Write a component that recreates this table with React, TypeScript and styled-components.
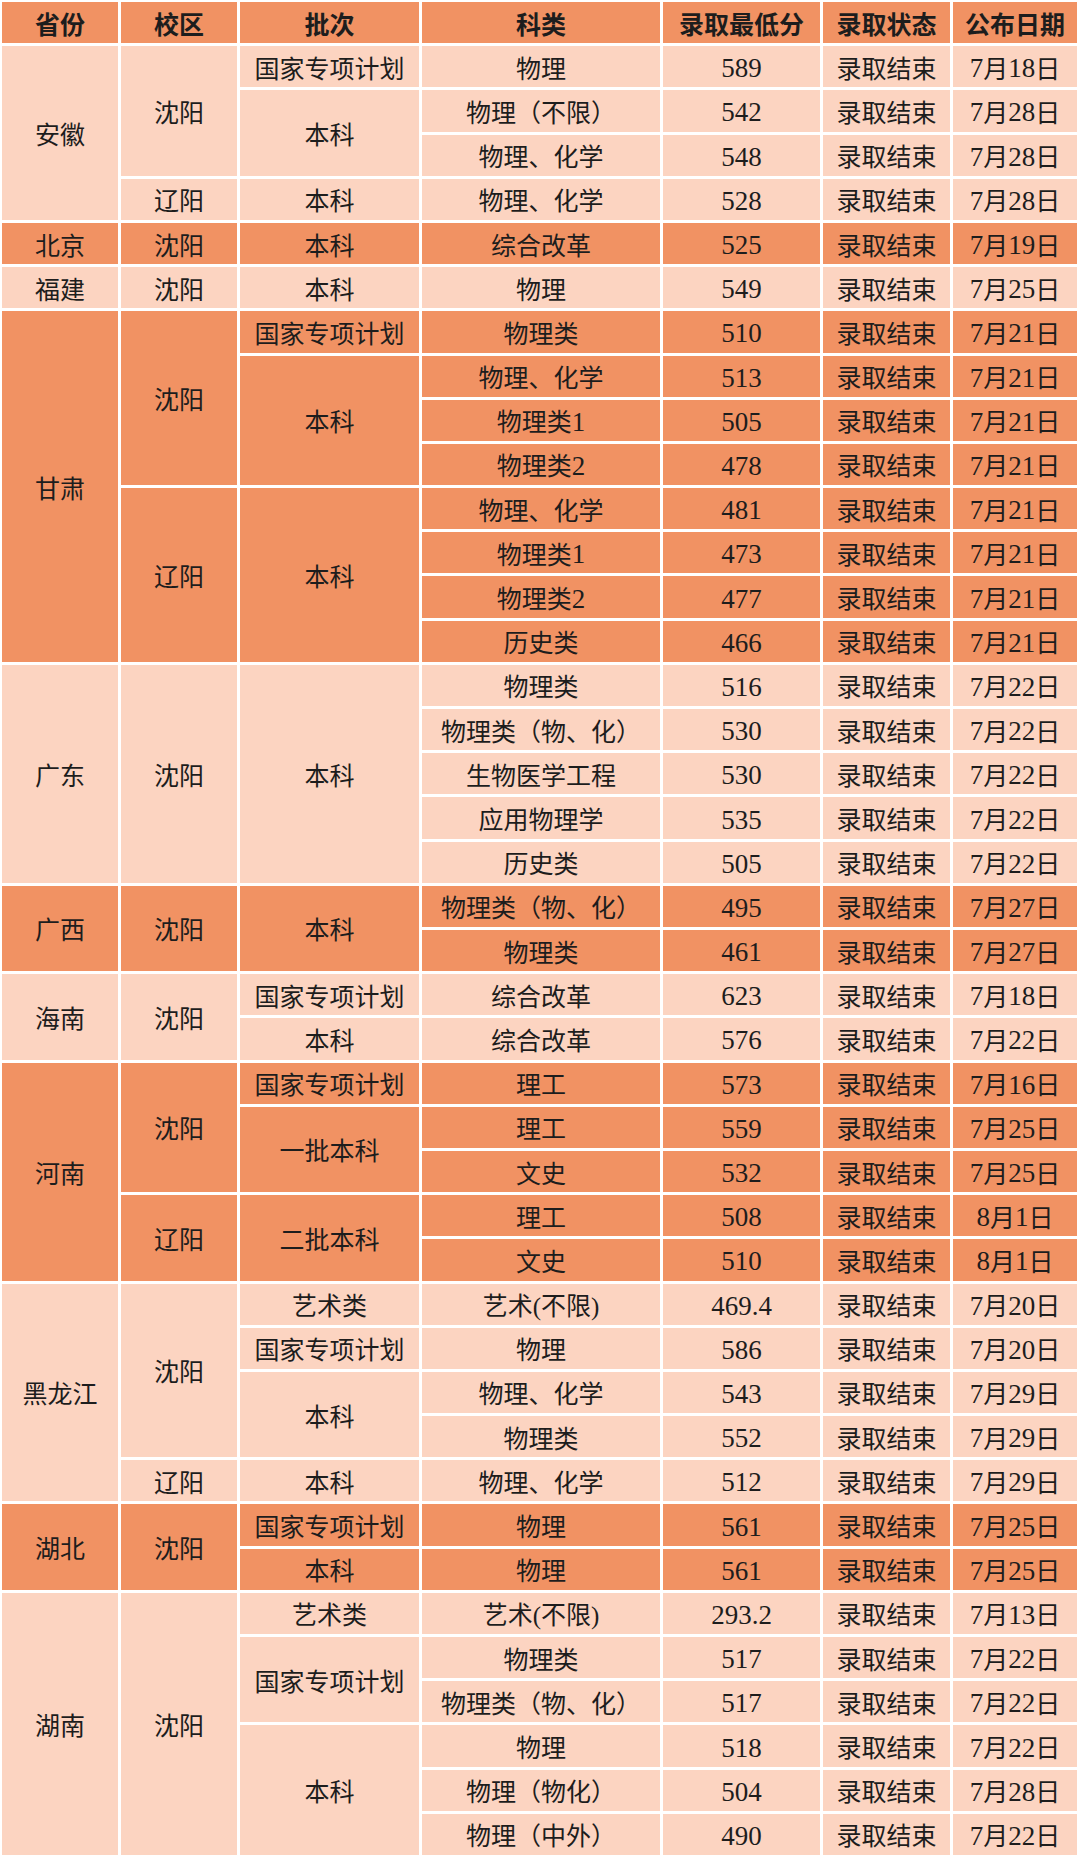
import styled, { createGlobalStyle } from "styled-components";

type Tone = "dark" | "light";

type Line = [string, string, string];
type Batch = { name: string; lines: Line[] };
type Campus = { name: string; batches: Batch[] };
type Province = { name: string; campuses: Campus[] };

const GlobalStyle = createGlobalStyle`
  html, body {
    margin: 0;
    padding: 0;
    background: #ffffff;
  }
`;

const headers = ["省份", "校区", "批次", "科类", "录取最低分", "录取状态", "公布日期"];

const provinces: Province[] = [
    {
        name: "安徽",
        campuses: [
            {
                name: "沈阳",
                batches: [
                    {name: "国家专项计划", lines: [["物理", "589", "7月18日"]]},
                    {name: "本科", lines: [["物理（不限）", "542", "7月28日"], ["物理、化学", "548", "7月28日"]]},
                ],
            },
            {name: "辽阳", batches: [{name: "本科", lines: [["物理、化学", "528", "7月28日"]]}]},
        ],
    },
    {
        name: "北京",
        campuses: [{name: "沈阳", batches: [{name: "本科", lines: [["综合改革", "525", "7月19日"]]}]}],
    },
    {
        name: "福建",
        campuses: [{name: "沈阳", batches: [{name: "本科", lines: [["物理", "549", "7月25日"]]}]}],
    },
    {
        name: "甘肃",
        campuses: [
            {
                name: "沈阳",
                batches: [
                    {name: "国家专项计划", lines: [["物理类", "510", "7月21日"]]},
                    {
                        name: "本科",
                        lines: [["物理、化学", "513", "7月21日"], ["物理类1", "505", "7月21日"], ["物理类2", "478", "7月21日"]],
                    },
                ],
            },
            {
                name: "辽阳",
                batches: [
                    {
                        name: "本科",
                        lines: [
                            ["物理、化学", "481", "7月21日"],
                            ["物理类1", "473", "7月21日"],
                            ["物理类2", "477", "7月21日"],
                            ["历史类", "466", "7月21日"],
                        ],
                    },
                ],
            },
        ],
    },
    {
        name: "广东",
        campuses: [
            {
                name: "沈阳",
                batches: [
                    {
                        name: "本科",
                        lines: [
                            ["物理类", "516", "7月22日"],
                            ["物理类（物、化）", "530", "7月22日"],
                            ["生物医学工程", "530", "7月22日"],
                            ["应用物理学", "535", "7月22日"],
                            ["历史类", "505", "7月22日"],
                        ],
                    },
                ],
            },
        ],
    },
    {
        name: "广西",
        campuses: [
            {
                name: "沈阳",
                batches: [{name: "本科", lines: [["物理类（物、化）", "495", "7月27日"], ["物理类", "461", "7月27日"]]}],
            },
        ],
    },
    {
        name: "海南",
        campuses: [
            {
                name: "沈阳",
                batches: [
                    {name: "国家专项计划", lines: [["综合改革", "623", "7月18日"]]},
                    {name: "本科", lines: [["综合改革", "576", "7月22日"]]},
                ],
            },
        ],
    },
    {
        name: "河南",
        campuses: [
            {
                name: "沈阳",
                batches: [
                    {name: "国家专项计划", lines: [["理工", "573", "7月16日"]]},
                    {name: "一批本科", lines: [["理工", "559", "7月25日"], ["文史", "532", "7月25日"]]},
                ],
            },
            {
                name: "辽阳",
                batches: [{name: "二批本科", lines: [["理工", "508", "8月1日"], ["文史", "510", "8月1日"]]}],
            },
        ],
    },
    {
        name: "黑龙江",
        campuses: [
            {
                name: "沈阳",
                batches: [
                    {name: "艺术类", lines: [["艺术(不限)", "469.4", "7月20日"]]},
                    {name: "国家专项计划", lines: [["物理", "586", "7月20日"]]},
                    {name: "本科", lines: [["物理、化学", "543", "7月29日"], ["物理类", "552", "7月29日"]]},
                ],
            },
            {name: "辽阳", batches: [{name: "本科", lines: [["物理、化学", "512", "7月29日"]]}]},
        ],
    },
    {
        name: "湖北",
        campuses: [
            {
                name: "沈阳",
                batches: [
                    {name: "国家专项计划", lines: [["物理", "561", "7月25日"]]},
                    {name: "本科", lines: [["物理", "561", "7月25日"]]},
                ],
            },
        ],
    },
    {
        name: "湖南",
        campuses: [
            {
                name: "沈阳",
                batches: [
                    {name: "艺术类", lines: [["艺术(不限)", "293.2", "7月13日"]]},
                    {name: "国家专项计划", lines: [["物理类", "517", "7月22日"], ["物理类（物、化）", "517", "7月22日"]]},
                    {
                        name: "本科",
                        lines: [["物理", "518", "7月22日"], ["物理（物化）", "504", "7月28日"], ["物理（中外）", "490", "7月22日"]],
                    },
                ],
            },
        ],
    },
];

const countCampus = (c: Campus) => c.batches.reduce((n, b) => n + b.lines.length, 0);
const countProvince = (p: Province) => p.campuses.reduce((n, c) => n + countCampus(c), 0);
const totalRows = provinces.reduce((n, p) => n + countProvince(p), 0) + 1;

// digits in the source are a touch taller than the CJK around them
function withDigits(text: string) {
    return text.split(/([0-9.]+)/).map((part, i) =>
        /^[0-9.]+$/.test(part) ? <Digits key={i}>{part}</Digits> : part
    );
}

export default function App() {
    const cells: JSX.Element[] = [];

    headers.forEach((h, i) => {
        cells.push(<Cell key={`h${i}`} $col={i + 1} $span={1} $tone="dark" $head>{h}</Cell>);
    });

    provinces.forEach((p, pi) => {
        const tone: Tone = pi % 2 === 0 ? "light" : "dark";
        let first = true;
        p.campuses.forEach((c, ci) => {
            let firstCampus = true;
            c.batches.forEach((b, bi) => {
                b.lines.forEach((l, li) => {
                    const k = `${pi}-${ci}-${bi}-${li}`;
                    if (first) {
                        cells.push(<Cell key={`p${k}`} $col={1} $span={countProvince(p)} $tone={tone}>{p.name}</Cell>);
                        first = false;
                    }
                    if (firstCampus) {
                        cells.push(<Cell key={`c${k}`} $col={2} $span={countCampus(c)} $tone={tone}>{c.name}</Cell>);
                        firstCampus = false;
                    }
                    if (li === 0) {
                        cells.push(<Cell key={`b${k}`} $col={3} $span={b.lines.length} $tone={tone}>{b.name}</Cell>);
                    }
                    cells.push(<Cell key={`s${k}`} $col={4} $span={1} $tone={tone}>{withDigits(l[0])}</Cell>);
                    cells.push(<Cell key={`m${k}`} $col={5} $span={1} $tone={tone}>{withDigits(l[1])}</Cell>);
                    cells.push(<Cell key={`t${k}`} $col={6} $span={1} $tone={tone}>录取结束</Cell>);
                    cells.push(<Cell key={`d${k}`} $col={7} $span={1} $tone={tone}>{withDigits(l[2])}</Cell>);
                });
            });
        });
    });

    return <>
        <GlobalStyle/>
        <Table $rows={totalRows}>{cells}</Table>
    </>
}

const Table = styled.div<{ $rows: number }>`
  box-sizing: border-box;
  width: 1080px;
  height: 1858px;
  padding: 2px 3px 3px 2px;

  display: grid;
  grid-template-columns: 116px 116px 179px 238px 157px 127px 124px;
  grid-template-rows: repeat(${({$rows}) => $rows}, 1fr);
  gap: 3px;

  background: #ffffff;
`

const Cell = styled.div<{ $col: number; $span: number; $tone: Tone; $head?: boolean }>`
  grid-column: ${({$col}) => $col};
  grid-row: span ${({$span}) => $span};

  display: flex;
  align-items: center;
  justify-content: center;
  white-space: nowrap;

  font-family: "Liberation Serif", "Noto Sans CJK SC", serif;
  font-size: 25px;
  font-weight: ${({$head}) => ($head ? 700 : 400)};
  color: #1d1d1d;
  background: ${({$tone}) => ($tone === "dark" ? "#f19263" : "#fcd4c1")};
`

const Digits = styled.span`
  font-size: 27px;
  line-height: 1;
  position: relative;
  top: 2px;
`
